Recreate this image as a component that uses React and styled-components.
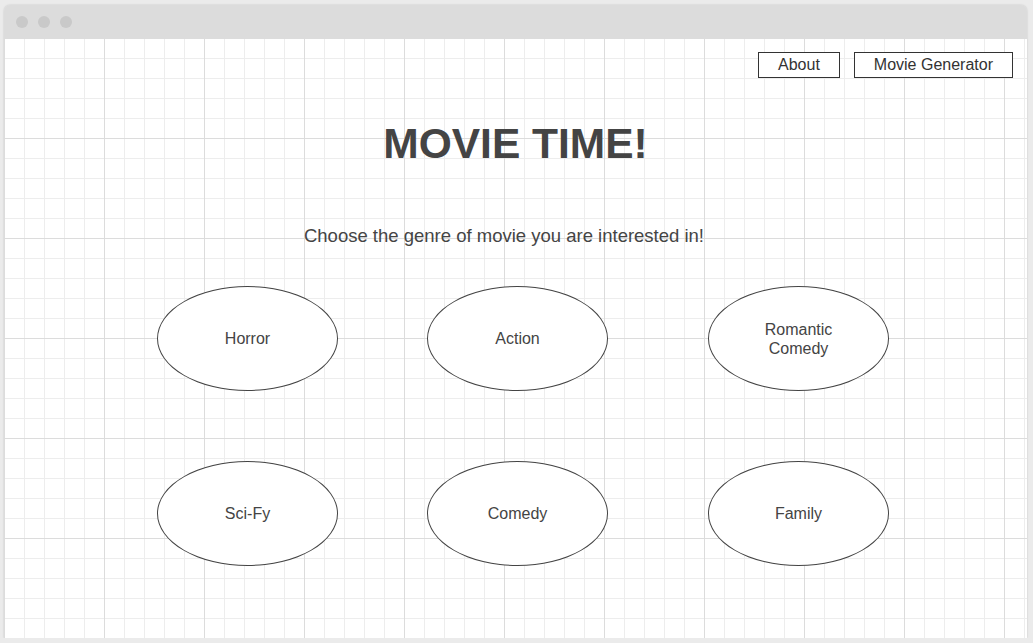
import React from 'react';
import styled, { createGlobalStyle } from 'styled-components';

const GlobalStyle = createGlobalStyle`
    body {
        margin: 0;
        background: #ebebeb;
        font-family: "Liberation Sans", Arial, sans-serif;
        color: #444;
    }
`;

const Window = styled.div`
    width: 1023px;
    margin: 5px 0 0 4px;
    border-radius: 6px 6px 0 0;
    overflow: hidden;
    box-shadow: 0 0 2px rgba(0, 0, 0, 0.18);
`;

const TitleBar = styled.div`
    height: 33px;
    background: #dcdcdc;
    display: flex;
    align-items: center;
    gap: 10px;
    padding-left: 12px;
    box-sizing: border-box;
`;

const Dot = styled.span`
    width: 12px;
    height: 12px;
    border-radius: 50%;
    background: #c9c9c9;
`;

const Canvas = styled.div`
    height: 600px;
    background-color: #fff;
    background-image:
        linear-gradient(to right, #dcdcdc 1px, transparent 1px),
        linear-gradient(to bottom, #dcdcdc 1px, transparent 1px),
        linear-gradient(to right, #ededed 1px, transparent 1px),
        linear-gradient(to bottom, #ededed 1px, transparent 1px);
    background-size: 100px 100px, 100px 100px, 20px 20px, 20px 20px;
    display: flex;
    flex-direction: column;
    align-items: center;
`;

const Nav = styled.nav`
    align-self: stretch;
    display: flex;
    justify-content: flex-end;
    gap: 14px;
    padding: 14px 14px 0 0;
`;

const NavButton = styled.button`
    height: 26px;
    padding: 0 19px;
    border: 1px solid #333;
    background: #fff;
    font-family: "Liberation Sans", Arial, sans-serif;
    font-size: 16px;
    color: #333;
    cursor: pointer;
`;

const Title = styled.h1`
    margin: 42px 0 0;
    font-size: 42.5px;
    line-height: 48px;
    font-weight: bold;
    color: #444;
`;

const Subtitle = styled.p`
    margin: 57px 0 0;
    padding-right: 23px;
    font-size: 18.5px;
    line-height: 22px;
    color: #444;
`;

const GenreGrid = styled.div`
    align-self: stretch;
    display: grid;
    grid-template-columns: 270px 281px 181px;
    row-gap: 70px;
    padding-left: 153px;
    margin-top: 39px;
`;

const Genre = styled.div`
    width: 181px;
    height: 105px;
    box-sizing: border-box;
    border: 1px solid #444;
    border-radius: 50%;
    background: #fff;
    display: flex;
    align-items: center;
    justify-content: center;
    text-align: center;
    font-size: 16px;
    line-height: 19px;
    color: #444;
    cursor: pointer;
`;

const genres = ['Horror', 'Action', 'Romantic\nComedy', 'Sci-Fy', 'Comedy', 'Family'];

const App = () => {
    return (
        <>
            <GlobalStyle />
            <Window>
                <TitleBar>
                    <Dot />
                    <Dot />
                    <Dot />
                </TitleBar>
                <Canvas>
                    <Nav>
                        <NavButton>About</NavButton>
                        <NavButton>Movie Generator</NavButton>
                    </Nav>
                    <Title>MOVIE TIME!</Title>
                    <Subtitle>Choose the genre of movie you are interested in!</Subtitle>
                    <GenreGrid>
                        {genres.map((g) => (
                            <Genre key={g}>
                                <span>
                                    {g.split('\n').map((line, i) => (
                                        <React.Fragment key={line}>
                                            {i > 0 && <br />}
                                            {line}
                                        </React.Fragment>
                                    ))}
                                </span>
                            </Genre>
                        ))}
                    </GenreGrid>
                </Canvas>
            </Window>
        </>
    );
};

export default App;
